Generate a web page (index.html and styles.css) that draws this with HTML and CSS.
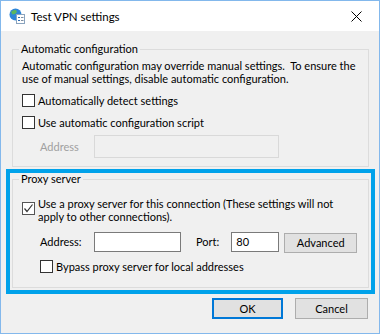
FILE: index.html
```html
<!DOCTYPE html>
<html>
<head>
    <title>Test VPN settings</title>
    <link rel="stylesheet" href="styles.css">
</head>
<body>
    <div class="window">
        <div class="titlebar">
            <svg class="app-icon" width="16" height="16" viewBox="0 0 16 16">
                <circle cx="6.5" cy="6.5" r="6" fill="#2f86d8"/>
                <path d="M2 4 Q4 1.5 7 2 L8 4 L6 6 L3.5 6.5 Z" fill="#5cb85c"/>
                <path d="M7 8 L10 7 L11 9 L9 12 L7 11 Z" fill="#5cb85c"/>
                <rect x="7.5" y="6.5" width="8" height="9" fill="#ffffff" stroke="#8aa4bf"/>
                <rect x="9" y="9" width="2" height="1" fill="#2f6fb8"/>
                <rect x="12" y="9" width="2.5" height="1" fill="#7d8fa3"/>
                <rect x="9" y="12" width="2" height="1" fill="#2f6fb8"/>
                <rect x="12" y="12" width="2.5" height="1" fill="#7d8fa3"/>
            </svg>
            <span class="title">Test VPN settings</span>
            <svg class="close" width="11" height="11" viewBox="0 0 11 11">
                <path d="M0.5 0.5 L10.5 10.5 M10.5 0.5 L0.5 10.5" stroke="#000000" stroke-width="1"/>
            </svg>
        </div>

        <div class="content">
            <fieldset class="group group-auto">
                <legend>Automatic configuration</legend>
                <div class="description">
                    Automatic configuration may override manual settings.&nbsp; To ensure the<br>
                    use of manual settings, disable automatic configuration.
                </div>
                <label class="check-row first">
                    <span class="checkbox"></span>
                    <span>Automatically detect settings</span>
                </label>
                <label class="check-row">
                    <span class="checkbox"></span>
                    <span>Use automatic configuration script</span>
                </label>
                <div class="field-row">
                    <span class="field-label disabled">Address</span>
                    <span class="input input-disabled input-script"></span>
                </div>
            </fieldset>

            <div class="highlight">
                <fieldset class="group group-proxy">
                    <legend>Proxy server</legend>
                    <label class="check-row proxy-check">
                        <span class="checkbox checked">
                            <svg width="11" height="11" viewBox="0 0 11 11">
                                <path d="M1.5 5.5 L4 8.5 L9.5 1.5" fill="none" stroke="#333333" stroke-width="1.2"/>
                            </svg>
                        </span>
                        <span>Use a proxy server for this connection (These settings will not<br>apply to other connections).</span>
                    </label>
                    <div class="proxy-row">
                        <span class="field-label">Address:</span>
                        <span class="input input-address"></span>
                        <span class="field-label port-label">Port:</span>
                        <span class="input input-port">80</span>
                        <button class="btn btn-advanced">Advanced</button>
                    </div>
                    <label class="check-row bypass">
                        <span class="checkbox"></span>
                        <span>Bypass proxy server for local addresses</span>
                    </label>
                </fieldset>
            </div>

            <div class="dialog-buttons">
                <button class="btn btn-ok">OK</button>
                <button class="btn btn-cancel">Cancel</button>
            </div>
        </div>
    </div>
</body>
</html>
```

FILE: styles.css
```css
body {
    margin: 0;
    font-family: 'Lato', 'Liberation Sans', sans-serif;
    font-size: 11px;
    color: #000000;
}

.window {
    width: 380px;
    height: 334px;
    box-sizing: border-box;
    border: 1px solid #83b8ec;
    background-color: #f0f0f0;
    overflow: hidden;
    white-space: nowrap;
}

.titlebar {
    height: 30px;
    background: #ffffff;
    display: flex;
    align-items: center;
}

.app-icon {
    margin-left: 8px;
    margin-right: 6px;
}

.title {
    flex: 1;
    font-size: 11.5px;
}

.close {
    margin-right: 17px;
}

.content {
    padding: 12px 4px 0 5px;
}

.group {
    margin: 0;
    padding: 0 0 0 9px;
    border: 1px solid #dcdcdc;
}

.group legend {
    margin-left: -3px;
    padding: 0 2px;
    line-height: 12px;
}

.group-auto {
    margin: 0 6px;
    padding-bottom: 8px;
}

.description {
    margin-top: 4px;
    line-height: 13px;
}

.check-row {
    display: flex;
    align-items: center;
    height: 16px;
    margin-top: 6px;
}

.check-row.first {
    margin-top: 7px;
}

.checkbox {
    width: 11px;
    height: 11px;
    border: 1px solid #333333;
    background: #ffffff;
    margin-right: 3px;
    flex-shrink: 0;
    display: flex;
}

.checkbox.checked {
    border-color: #555555;
}

.field-row {
    display: flex;
    align-items: center;
    margin-top: 5px;
    padding-left: 18px;
}

.field-label {
    width: 54px;
}

.disabled {
    color: #a0a0a0;
}

.input {
    box-sizing: border-box;
    height: 20px;
    border: 1px solid #7a7a7a;
    background: #ffffff;
    padding-left: 4px;
    line-height: 18px;
}

.input-disabled {
    border-color: #d9d9d9;
    background: #f0f0f0;
}

.input-script {
    width: 185px;
    height: 23px;
}

.highlight {
    margin-top: 2px;
    border: 4px solid #00a2ea;
}

.group-proxy {
    margin: 0 2px 2px;
    padding-bottom: 13px;
}

.proxy-check {
    height: 26px;
    margin-top: 12px;
    line-height: 13px;
    align-items: center;
}

.proxy-check .checkbox {
    margin-bottom: 3px;
}

.proxy-row {
    display: flex;
    align-items: center;
    margin-top: 8px;
    padding-left: 18px;
    height: 21px;
}

.input-address {
    width: 87px;
}

.port-label {
    width: auto;
    margin-left: 15px;
    margin-right: 12px;
}

.input-port {
    width: 48px;
}

.btn {
    font-family: inherit;
    font-size: 11px;
    color: #000000;
    background: #e1e1e1;
    border: 1px solid #adadad;
    padding: 0;
    box-sizing: border-box;
}

.btn-advanced {
    width: 73px;
    height: 20px;
    margin-left: 5px;
    margin-top: 2px;
}

.bypass {
    margin-top: 6px;
    padding-left: 18px;
}

.dialog-buttons {
    display: flex;
    justify-content: flex-end;
    gap: 12px;
    margin-top: 4px;
    margin-right: 7px;
}

.btn-ok,
.btn-cancel {
    width: 73px;
    height: 21px;
}

.btn-ok {
    width: 71px;
    border: 2px solid #0078d7;
}
```
